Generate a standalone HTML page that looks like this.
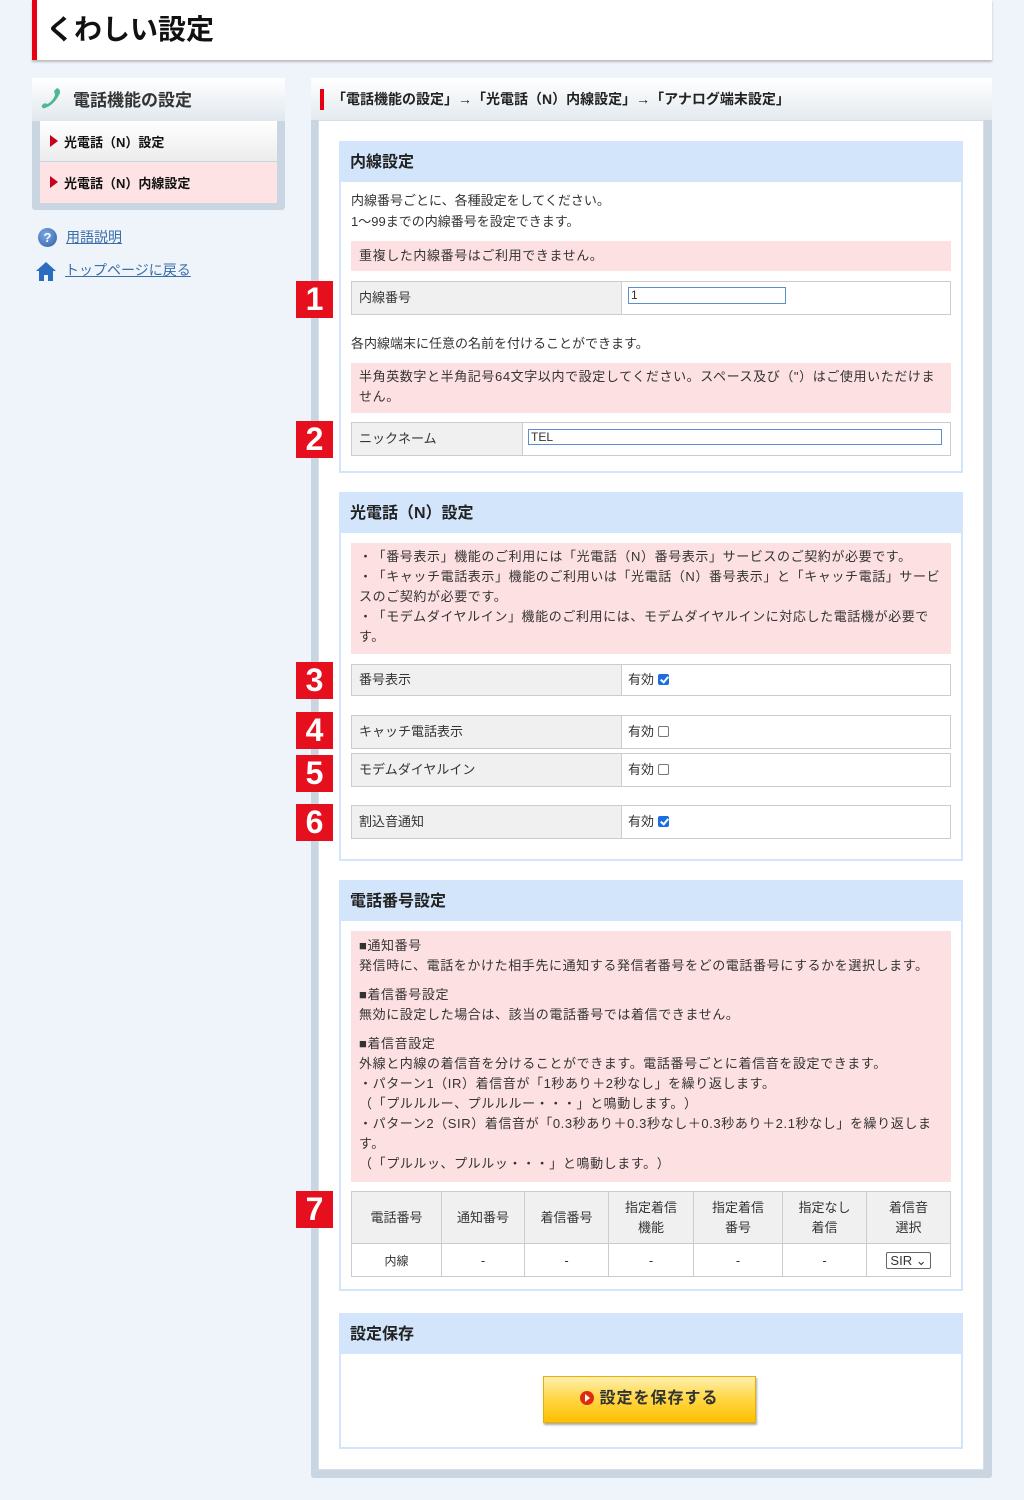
<!DOCTYPE html>
<html><head><meta charset="utf-8"><style>
*{margin:0;padding:0;box-sizing:border-box}
body{width:1024px;height:1500px;background:#eff4fb;font-family:"Liberation Sans","Noto Sans CJK JP",sans-serif;color:#333;position:relative;overflow:hidden;font-size:13px;text-spacing-trim:space-all}
.a{position:absolute}
.title{left:32px;top:0;width:960px;height:60px;background:#fff;border-left:5px solid #e60012;box-shadow:0 2px 2px #bbb}
.title span{position:absolute;left:9px;top:8px;font-size:28px;font-weight:bold;color:#111}
.side{left:32px;top:78px;width:253px;height:132px;background:#c9d6e1;border-radius:3px}
.sh{left:0;top:0;width:253px;height:43px;background:linear-gradient(#fff,#e1e8ee)}
.si{left:8px;width:237px;height:40px;font-size:13px;font-weight:bold;color:#111;padding:11px 0 0 24px}
.si:before{content:"";position:absolute;left:10px;top:14px;border-left:8px solid #c8001a;border-top:6px solid transparent;border-bottom:6px solid transparent}
.lnk{color:#3a6ea8;text-decoration:underline;font-size:14px}
.main{left:311px;top:78px;width:681px;height:1400px;background:#c9d6e1;border-radius:3px}
.mh{left:0;top:0;width:681px;height:42px;background:linear-gradient(#fff,#e4eaef)}
.inner{left:7px;top:42px;width:666px;height:1350px;background:#fff;border:1px solid #d8dee4}
.sec{left:339px;width:624px;border:2px solid #d3e5fa;background:#fff}
.sech{left:339px;width:624px;height:41px;background:#d2e5fb;font-size:16px;font-weight:bold;color:#222;padding:7px 0 0 11px}
.pink{left:351px;width:600px;background:#fde0e1;line-height:20px;padding:4px 8px;letter-spacing:0.6px}
.row{left:351px;width:600px;border:1px solid #ccc;background:#fff}
.lab{position:absolute;left:0;top:0;bottom:0;background:#f0f0f0;border-right:1px solid #ccc;padding-left:7px}
.val{position:absolute;top:0;bottom:0;padding-left:6px}
.num{left:296px;width:37px;height:37px;background:#e60f1e;color:#fff;font-weight:bold;font-size:32px;text-align:center;line-height:37px}
.cb{display:inline-block;width:11px;height:11px;border:1px solid #777;border-radius:2px;vertical-align:-1px;margin-left:4px;background:#fff}
.cb.on{background:#1a6ee0;border-color:#1a6ee0;position:relative}
.cb.on:after{content:"";position:absolute;left:3px;top:0px;width:3px;height:6px;border:solid #fff;border-width:0 2px 2px 0;transform:rotate(40deg)}
table{border-collapse:collapse}
td{border:1px solid #ccc;text-align:center;font-size:13px}
</style></head><body>
<div class="a title"><span>くわしい設定</span></div>

<div class="a side">
 <div class="a sh"></div>
 <svg class="a" style="left:8px;top:7px" width="24" height="26" viewBox="0 0 24 26"><path d="M17 3c3 1 4 4 2 7c-3 6-8 11-14 13c-2 1-4-1-3-3l3-2c1 1 3 1 4 0c3-2 5-5 6-8c0-2-1-3-1-4z" fill="#4cb890"/></svg>
 <div class="a" style="left:41px;top:8px;font-size:17px;font-weight:bold;color:#333">電話機能の設定</div>
 <div class="a si" style="top:43px;background:linear-gradient(#fff,#ececec)">光電話（N）設定</div>
 <div class="a si" style="top:84px;background:#fde3e3;height:41px">光電話（N）内線設定</div>
</div>
<div class="a" style="left:38px;top:228px;width:19px;height:19px;border-radius:50%;background:radial-gradient(circle at 40% 35%,#7ea9e0,#2c5ea8);color:#fff;font-weight:bold;font-size:13px;text-align:center;line-height:19px">?</div>
<div class="a lnk" style="left:66px;top:227px">用語説明</div>
<svg class="a" style="left:35px;top:260px" width="22" height="22" viewBox="0 0 22 22"><path d="M11 2L1 11h3v10h5v-6h4v6h5V11h3z" fill="#2a6cc0"/></svg>
<div class="a lnk" style="left:65px;top:260px">トップページに戻る</div>

<div class="a main">
 <div class="a mh"></div>
 <div class="a" style="left:9px;top:11px;width:4px;height:21px;background:#e60012"></div>
 <div class="a" style="left:21px;top:11px;font-size:14px;font-weight:bold;color:#222">「電話機能の設定」→「光電話（N）内線設定」→「アナログ端末設定」</div>
 <div class="a inner"></div>
</div>

<!-- section 1 -->
<div class="a sec" style="top:141px;height:332px"></div>
<div class="a sech" style="top:141px">内線設定</div>
<div class="a" style="left:351px;top:190px;line-height:21px">内線番号ごとに、各種設定をしてください。<br>1～99までの内線番号を設定できます。</div>
<div class="a pink" style="top:241px;height:30px;padding-top:5px">重複した内線番号はご利用できません。</div>
<div class="a num" style="top:281px">1</div>
<div class="a row" style="top:281px;height:34px"><div class="lab" style="width:270px;line-height:31px">内線番号</div><div class="val" style="left:270px"><div style="position:absolute;left:6px;top:5px;width:158px;height:17px;border:1px solid #5a8fd0;font-size:12px;line-height:15px;padding-left:2px">1</div></div></div>
<div class="a" style="left:351px;top:333px">各内線端末に任意の名前を付けることができます。</div>
<div class="a pink" style="top:363px;height:50px">半角英数字と半角記号64文字以内で設定してください。スペース及び（"）はご使用いただけません。</div>
<div class="a num" style="top:421px">2</div>
<div class="a row" style="top:422px;height:34px"><div class="lab" style="width:171px;line-height:31px">ニックネーム</div><div class="val" style="left:171px;right:0"><div style="position:absolute;left:5px;top:6px;width:414px;height:16px;border:1px solid #5a8fd0;font-size:12px;line-height:14px;padding-left:2px">TEL</div></div></div>

<!-- section 2 -->
<div class="a sec" style="top:492px;height:369px"></div>
<div class="a sech" style="top:492px">光電話（N）設定</div>
<div class="a pink" style="top:543px;height:111px">・「番号表示」機能のご利用には「光電話（N）番号表示」サービスのご契約が必要です。<br>・「キャッチ電話表示」機能のご利用いは「光電話（N）番号表示」と「キャッチ電話」サービスのご契約が必要です。<br>・「モデムダイヤルイン」機能のご利用には、モデムダイヤルインに対応した電話機が必要です。</div>
<div class="a num" style="top:662px">3</div>
<div class="a row" style="top:664px;height:32px"><div class="lab" style="width:270px;line-height:29px">番号表示</div><div class="val" style="left:270px;line-height:29px">有効<span class="cb on"></span></div></div>
<div class="a num" style="top:712px">4</div>
<div class="a row" style="top:715px;height:34px"><div class="lab" style="width:270px;line-height:31px">キャッチ電話表示</div><div class="val" style="left:270px;line-height:31px">有効<span class="cb"></span></div></div>
<div class="a num" style="top:755px">5</div>
<div class="a row" style="top:753px;height:34px"><div class="lab" style="width:270px;line-height:31px">モデムダイヤルイン</div><div class="val" style="left:270px;line-height:31px">有効<span class="cb"></span></div></div>
<div class="a num" style="top:804px">6</div>
<div class="a row" style="top:805px;height:34px"><div class="lab" style="width:270px;line-height:31px">割込音通知</div><div class="val" style="left:270px;line-height:31px">有効<span class="cb on"></span></div></div>

<!-- section 3 -->
<div class="a sec" style="top:880px;height:411px"></div>
<div class="a sech" style="top:880px">電話番号設定</div>
<div class="a pink" style="top:931px;height:251px;padding-top:5px">■通知番号<br>発信時に、電話をかけた相手先に通知する発信者番号をどの電話番号にするかを選択します。<div style="height:9px"></div>■着信番号設定<br>無効に設定した場合は、該当の電話番号では着信できません。<div style="height:9px"></div>■着信音設定<br>外線と内線の着信音を分けることができます。電話番号ごとに着信音を設定できます。<br>・パターン1（IR）着信音が「1秒あり＋2秒なし」を繰り返します。<br>（「プルルルー、プルルルー・・・」と鳴動します。）<br>・パターン2（SIR）着信音が「0.3秒あり＋0.3秒なし＋0.3秒あり＋2.1秒なし」を繰り返します。<br>（「プルルッ、プルルッ・・・」と鳴動します。）</div>
<div class="a num" style="top:1191px">7</div>
<table class="a" style="left:351px;top:1191px;width:600px">
<tr style="height:52px;background:#f0f0f0;line-height:20px"><td style="width:90px">電話番号</td><td style="width:83px">通知番号</td><td style="width:84px">着信番号</td><td style="width:85px">指定着信<br>機能</td><td style="width:89px">指定着信<br>番号</td><td style="width:84px">指定なし<br>着信</td><td>着信音<br>選択</td></tr>
<tr style="height:33px"><td style="font-size:12px">内線</td><td>-</td><td>-</td><td>-</td><td>-</td><td>-</td><td><span style="display:inline-block;border:1px solid #666;border-radius:2px;padding:0 3px;font-size:13px;line-height:15px">SIR ⌄</span></td></tr>
</table>

<!-- save -->
<div class="a sec" style="top:1313px;height:136px"></div>
<div class="a sech" style="top:1313px">設定保存</div>
<div class="a" style="left:543px;top:1376px;width:213px;height:47px;background:linear-gradient(#fff0b0,#ffd84a 45%,#ffbf00);border:1px solid #e8b000;box-shadow:1px 2px 2px #aaa;text-align:center;line-height:44px;font-size:16px;font-weight:bold;color:#333;letter-spacing:1px"><span style="display:inline-block;width:14px;height:14px;border-radius:50%;background:#e02a10;vertical-align:-2px;margin-right:5px;position:relative"><span style="position:absolute;left:5px;top:3px;border-left:5px solid #fff;border-top:4px solid transparent;border-bottom:4px solid transparent"></span></span>設定を保存する</div>
</body></html>
